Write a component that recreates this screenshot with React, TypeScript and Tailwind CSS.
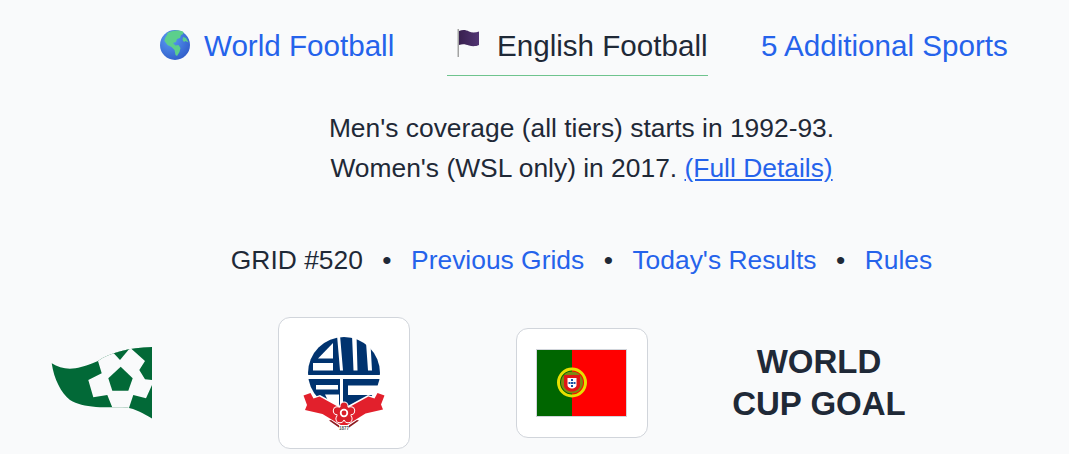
import { Fragment } from "react";

const FONT = "font-['Liberation_Sans',Arial,sans-serif]";

function Globe() {
  return (
    <svg width="32" height="32" viewBox="0 0 32 32" className="shrink-0">
      <defs>
        <radialGradient id="sea" cx="0.35" cy="0.3" r="0.85">
          <stop offset="0" stopColor="#5a9df5" />
          <stop offset="1" stopColor="#2c55c4" />
        </radialGradient>
      </defs>
      <circle cx="16" cy="16" r="15" fill="url(#sea)" />
      <path
        d="M7 5C11 1.500 19 .5 24 2.500c1 1.500 0 3-2 3.500l-1 3-3 1-1 3-3 1 2.500 2.500 3-.5 2 3-1 4-2.500 4-1.500-1-1-5-3-3-4-2-3-4c0-2.500 1.500-5 3.500-7.500z"
        fill="#5ccf8c"
      />
      <path d="M24 8l3 1 2.500 4.500-3-1.500-1.500 1-1.500-2z" fill="#5ccf8c" />
    </svg>
  );
}

function PurpleFlag() {
  return (
    <svg width="24" height="30" viewBox="0 0 24 30" className="shrink-0">
      <defs>
        <linearGradient id="flagPurple" x1="0" y1="0" x2="1" y2="0">
          <stop offset="0" stopColor="#38204f" />
          <stop offset="1" stopColor="#523573" />
        </linearGradient>
      </defs>
      <rect x="0.500" y="0" width="1.500" height="28" fill="#a3a3a3" />
      <path d="M2 2C6 .5 9 1 12 2.500s7 1 10 0V16c-3 1.500-7 1.500-10 .5s-6-2-10-.5z" fill="url(#flagPurple)" />
    </svg>
  );
}

function Ball() {
  return (
    <svg width="101" height="72" viewBox="0 0 101 72" className="shrink-0">
      <defs>
        <clipPath id="ballEdge">
          <path d="M.7 16.300C9 22 20 23 30 20 38 18 42 16 47 14 58 6 78 .5 101 0v71.500C92 66 84 62 76 60.500 64 59.500 54 61 45 60 34 59 26 57 19 53 10 46 3 32 .7 16.300z" />
        </clipPath>
      </defs>
      <g clipPath="url(#ballEdge)">
        <rect width="101" height="72" fill="#026937" />
        <path
          d="M47 14L60 3l41-5v40L95 51.300 82.300 48 77.300 63H62.300L56.300 48 42.300 50.300 37.300 33 50.700 26.300z"
          fill="#f9fafb"
        />
        <path d="M60.700 4L79 1 69 13z" fill="#026937" />
        <path d="M80 1.500L101-1v34l-7-.7L88.300 23 94 14z" fill="#026937" />
        <path d="M69.700 19.700L81.700 31.300 77.300 43.700H61.300L57.300 31.300z" fill="#026937" />
      </g>
    </svg>
  );
}

function Bolton() {
  const petals = [
    [42, 71],
    [48.700, 75.800],
    [46.100, 83.700],
    [37.900, 83.700],
    [35.300, 75.800],
  ];
  return (
    <svg width="84" height="96" viewBox="0 0 84 96">
      <circle cx="42" cy="38" r="36" fill="#00336f" />
      {/* B counters */}
      <path d="M31 8L16 23.500h15z" fill="#fff" />
      <path d="M11 28h20v7.500H11z" fill="#fff" />
      {/* W slits and the gap after the B */}
      <path d="M35 0h3l3 35.500h-3zM50 0h4.500l1 35.500h-4zM63.500 0H68l2 35.500h-4z" fill="#fff" />
      {/* band between the two rows */}
      <rect x="4" y="40" width="76" height="4" fill="#fff" />
      {/* F and C */}
      <path d="M14 50h22v4.500H14zM23 59.500h14V78H32z" fill="#fff" />
      <path d="M38 44h3v32h-3z" fill="#fff" />
      <path d="M46 50.500h34v9.500H46z" fill="#fff" />
      {/* ribbon */}
      <path d="M0 60l9-3 3 5 6-2 24 13 24-13 6 2 3-5 9 3-4 9 3 6-19 5-22 13-22-13-19-5 3-6z" fill="#fff" />
      <path d="M1.500 60.500l7-2.500 3 5.500 6-2L42 75l24.500-13.500 6 2 3-5.500 7 2.500-3.500 9 2 5-17.500 4L42 92 20.500 79 3 75l2-5z" fill="#e2202c" />
      <path d="M29 85l9 6h8l9-6 2 .5-12 8.500h-6l-12-8.500z" fill="#8e1a1f" />
      <g fill="#fff">
        {petals.map(([x, y]) => (
          <circle key={x + y} cx={x} cy={y} r="4.500" />
        ))}
      </g>
      <g fill="#d9202a">
        {petals.map(([x, y]) => (
          <circle key={x + y} cx={x} cy={y} r="3.500" />
        ))}
      </g>
      <circle cx="42" cy="78" r="7" fill="#d9202a" />
      <circle cx="42" cy="78" r="4.200" fill="#fff" />
      <circle cx="42" cy="78" r="2.400" fill="#d9202a" />
      <rect x="37" y="90" width="10" height="5" fill="#fff" />
      <text x="42" y="94.500" textAnchor="middle" fontSize="4.500" fontWeight="700" fontFamily="Liberation Sans" fill="#555">1877</text>
    </svg>
  );
}

function PortugalFlag() {
  return (
    <svg width="91" height="68" viewBox="0 0 91 68" className="mr-[1px]">
      <rect width="91" height="68" fill="#f00" />
      <rect width="36" height="68" fill="#060" />
      <rect x=".5" y=".5" width="90" height="67" fill="none" stroke="#d1d5db" />
      <circle cx="36" cy="33.500" r="13.500" fill="none" stroke="#e6e000" strokeWidth="3" />
      <circle cx="36" cy="33.500" r="11" fill="#7d8a10" />
      <path d="M28 26h16v10c0 4-4 6.500-8 6.500s-8-2.500-8-6.500z" fill="#e01515" />
      <path d="M31.500 29h9v7c0 2-2.500 3.500-4.500 3.500s-4.500-1.500-4.500-3.500z" fill="#fff" />
      <path d="M35 30h2v2h-2zM32.500 33h2v2h-2zM37.500 33h2v2h-2zM35 33h2v2h-2zM35 36h2v2h-2z" fill="#1a4fa0" />
    </svg>
  );
}

const gridLinks = ["Previous Grids", "Today's Results", "Rules"];

export default function App() {
  return (
    <div className={`${FONT} h-[454px] overflow-hidden bg-[#f9fafb] text-[#1f2937]`}>
      <nav className="flex h-[76px] items-start text-[29.6px] leading-[32px]">
        <a className="ml-[159px] flex w-[235px] items-start gap-[13px] whitespace-nowrap pt-[29px] text-[#2563eb]">
          <Globe />
          <span className="mt-[1px]">World Football</span>
        </a>
        <div className="ml-[53px] flex h-[76px] w-[261px] items-start gap-[16px] whitespace-nowrap border-b border-[#6fc48e] pl-[10px] pt-[29px]">
          <PurpleFlag />
          <span className="mt-[1px]">English Football</span>
        </div>
        <a className="ml-[53px] whitespace-nowrap pt-[30px] text-[#2563eb]">5 Additional Sports</a>
      </nav>

      <div className="pl-[94px]">
        <p className="mt-[32px] text-center text-[26.4px] leading-[40px]">
          Men's coverage (all tiers) starts in 1992-93.
          <br />
          Women's (WSL only) in 2017.{" "}
          <a className="text-[#2563eb] underline">(Full Details)</a>
        </p>

        <div className="mt-[52px] flex justify-center text-[26.4px] leading-[40px]">
          <span>GRID #520</span>
          {gridLinks.map((l) => (
            <Fragment key={l}>
              <span className="mx-[19.5px]">•</span>
              <a className="text-[#2563eb]">{l}</a>
            </Fragment>
          ))}
        </div>
      </div>

      <div className="mt-[37px] flex items-center">
        <div className="ml-[51px]">
          <Ball />
        </div>
        <div className="ml-[126px] flex h-[132px] w-[132px] items-center justify-center rounded-xl border border-[#d1d5db] bg-white">
          <Bolton />
        </div>
        <div className="ml-[106px] flex h-[110px] w-[132px] items-center justify-center rounded-xl border border-[#d1d5db] bg-white">
          <PortugalFlag />
        </div>
        <div className="ml-[55px] w-[232px] text-center text-[33px] font-bold leading-[42px]">
          WORLD
          <br />
          CUP GOAL
        </div>
      </div>
    </div>
  );
}
